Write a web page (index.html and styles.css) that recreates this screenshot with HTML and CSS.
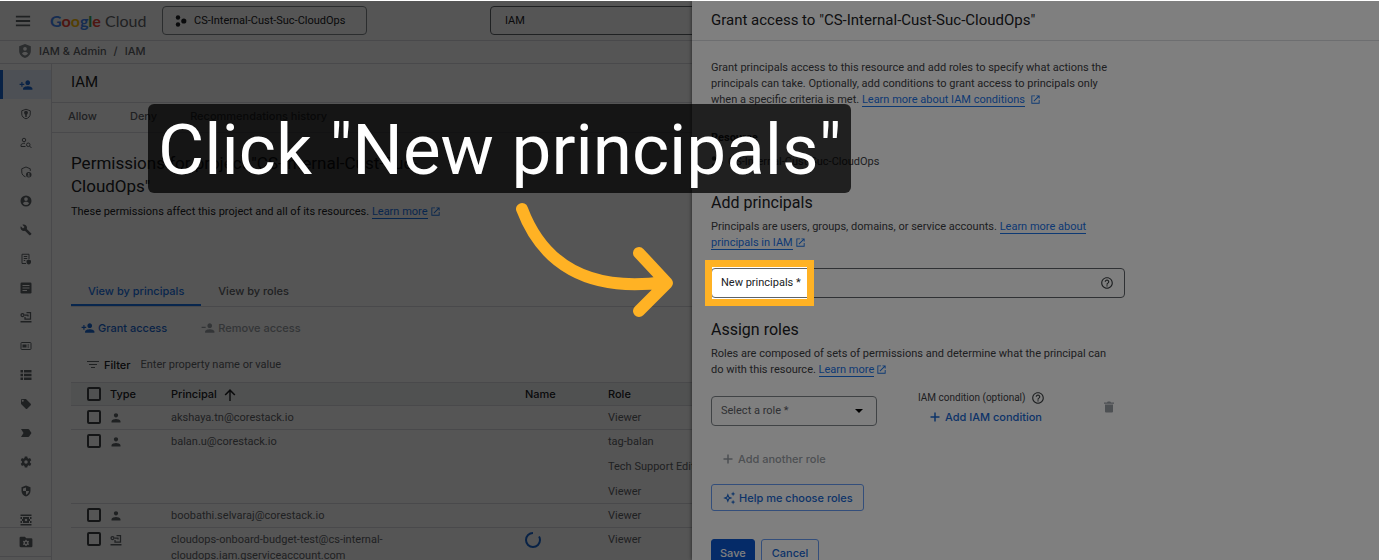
FILE: index.html
```html
<!DOCTYPE html>
<html lang="en">
<head>
    <meta charset="UTF-8">
    <meta name="viewport" content="width=device-width, initial-scale=1.0">
    <title>IAM - Google Cloud</title>
    <link rel="stylesheet" href="styles.css">
</head>
<body>
    <!-- Shared icons -->
    <svg class="sprite" aria-hidden="true">
        <symbol id="person-add" viewBox="0 0 24 24"><path d="M15 12c2.21 0 4-1.79 4-4s-1.79-4-4-4-4 1.79-4 4 1.79 4 4 4zm-9-2V7H4v3H1v2h3v3h2v-3h3v-2H6zm9 4c-2.67 0-8 1.34-8 4v2h16v-2c0-2.66-5.33-4-8-4z"/></symbol>
        <symbol id="person-remove" viewBox="0 0 24 24"><path d="M15 12c2.21 0 4-1.79 4-4s-1.79-4-4-4-4 1.79-4 4 1.79 4 4 4zm-14-2v2h7v-2zm14 4c-2.67 0-8 1.34-8 4v2h16v-2c0-2.66-5.33-4-8-4z"/></symbol>
        <symbol id="person" viewBox="0 0 24 24"><path d="M12 11c2.4 0 4.3-1.9 4.3-4.300S14.400 2.500 12 2.500 7.700 4.300 7.700 6.700 9.600 11 12 11zm0 3c-3.300 0-9 1.500-9 4.500V21h18v-2.500c0-3-5.700-4.500-9-4.500z"/></symbol>
        <symbol id="service" viewBox="0 0 24 24"><path d="M1 20h22v3H1z"/><path fill="none" stroke="currentColor" stroke-width="2.500" d="M9 8h8M13 3h8v13H10v-4M16 8v3"/><circle cx="5" cy="8" r="3" fill="none" stroke="currentColor" stroke-width="2.500"/></symbol>
        <symbol id="open" viewBox="0 0 24 24"><path d="M19 19H5V5h6V3H3v18h18v-8h-2v6zM14 3v2h3.600l-9.800 9.800 1.400 1.400L19 6.400V10h2V3h-7z"/></symbol>
        <symbol id="help" viewBox="0 0 24 24"><path d="M11 18h2v-2h-2v2zm1-16C6.480 2 2 6.480 2 12s4.480 10 10 10 10-4.480 10-10S17.520 2 12 2zm0 18c-4.410 0-8-3.590-8-8s3.590-8 8-8 8 3.590 8 8-3.590 8-8 8zm0-14c-2.210 0-4 1.790-4 4h2c0-1.100.9-2 2-2s2 .9 2 2c0 2-3 1.750-3 5h2c0-2.250 3-2.500 3-5 0-2.210-1.790-4-4-4z"/></symbol>
        <symbol id="plus" viewBox="0 0 24 24"><path d="M21 13.500h-7.500V21h-3v-7.500H3v-3h7.500V3h3v7.500H21z"/></symbol>
    </svg>

    <div class="app">
        <header class="topbar">
            <button class="icon-btn menu" aria-label="Main menu">
                <svg class="icon-lg" viewBox="0 0 18 18"><path d="M1 3h16v2H1zM1 8h16v2H1zM1 13h16v2H1z"/></svg>
            </button>
            <a class="logo" href="#"><b class="g-blue">G</b><b class="g-red">o</b><b class="g-yellow">o</b><b class="g-blue">g</b><b class="g-green">l</b><b class="g-red">e</b> Cloud</a>
            <button class="project">
                <svg class="icon" viewBox="0 0 12 12"><circle cx="3" cy="2.500" r="2.200"/><circle cx="3" cy="9.500" r="2.200"/><circle cx="8.800" cy="6" r="2.600"/></svg>
                CS-Internal-Cust-Suc-CloudOps
            </button>
            <input class="search" type="text" value="IAM" aria-label="Search">
        </header>

        <nav class="breadcrumb" aria-label="Breadcrumb">
            <svg class="icon-lg" viewBox="0 0 24 24"><path fill-rule="evenodd" d="M12 0 2 4v8c0 5.500 4.200 10.400 10 12 5.800-1.600 10-6.500 10-12V4zM12 5a3.200 3.200 0 1 1 0 6.400A3.200 3.200 0 0 1 12 5zm0 8.500c2.500 0 5 1 5 2.600-1 1.700-2.900 3-5 3.400-2.100-.4-4-1.700-5-3.400 0-1.600 2.500-2.600 5-2.600z"/></svg>
            <a href="#">IAM &amp; Admin</a>
            <span>/</span>
            <span>IAM</span>
        </nav>

        <div class="body">
            <aside class="sidebar">
                <ul class="side-list">
                    <li><a class="active" href="#" aria-label="IAM"><svg class="icon-lg"><use href="#person-add"/></svg></a></li>
                    <li><a href="#" aria-label="Privileged access"><svg class="icon" viewBox="0 0 24 24"><path class="line" d="M12 2.500 3.500 5.500V12c0 4.500 3.500 8.300 8.500 9.500 5-1.200 8.500-5 8.500-9.500V5.500z"/><circle cx="12" cy="9.500" r="3.800"/><path d="M10.500 12h3v6h-3z"/></svg></a></li>
                    <li><a href="#" aria-label="Policy troubleshooter"><svg class="icon" viewBox="0 0 24 24"><circle class="line" cx="8" cy="6" r="3.500"/><path class="line" d="M11 19H2v-3c0-2 4-3.500 8-3.500M19 18l4 4"/><circle class="line" cx="16.500" cy="15.500" r="3.500"/></svg></a></li>
                    <li><a href="#" aria-label="Policy analyzer"><svg class="icon" viewBox="0 0 24 24"><path class="line" d="M20.500 10V5.500L12 2 3.500 5.500V12c0 4.500 3 8.300 7.500 9.500"/><circle cx="17.500" cy="17.500" r="5.500"/><circle class="hole" cx="17.500" cy="15.800" r="1.700"/><path class="hole" d="M14.500 20c1-2 5-2 6 0-1.500 1.500-4.500 1.500-6 0z"/></svg></a></li>
                    <li><a href="#" aria-label="Identity"><svg class="icon" viewBox="0 0 24 24"><path fill-rule="evenodd" d="M12 1a11 11 0 1 0 0 22 11 11 0 0 0 0-22zm0 3.500a3.700 3.700 0 1 1 0 7.400 3.700 3.700 0 0 1 0-7.400zm0 9c2.700 0 6 1.300 6 3.300a7.400 7.400 0 0 1-12 0c0-2 3.300-3.300 6-3.300z"/></svg></a></li>
                    <li><a href="#" aria-label="Troubleshoot"><svg class="icon" viewBox="0 0 24 24"><path d="m22.700 19-9.100-9.100c.9-2.300.4-5-1.500-6.900-2-2-5-2.400-7.400-1.300L9 6 6 9 1.600 4.700C.4 7.100.9 10.100 2.900 12.100c1.900 1.900 4.600 2.400 6.900 1.500l9.100 9.100c.4.4 1 .4 1.400 0l2.300-2.300c.5-.4.5-1.100.1-1.400z"/></svg></a></li>
                    <li><a href="#" aria-label="Organization policies"><svg class="icon" viewBox="0 0 24 24"><path class="line" d="M12 21H4V2.500h14V12M7.500 7h7M7.500 11h7M7.500 15h3"/><path d="m17.500 13 4.500 2v3c0 2.500-2 4.500-4.500 5-2.500-.5-4.500-2.500-4.500-5v-3z"/></svg></a></li>
                    <li><a href="#" aria-label="Quotas"><svg class="icon" viewBox="0 0 24 24"><rect x="1" y="1" width="22" height="22" rx="2.500"/><path class="hole" d="M5 6h14v2H5zM5 11h14v2H5zM5 16h9v2H5z"/></svg></a></li>
                    <li><a href="#" aria-label="Service accounts"><svg class="icon"><use href="#service"/></svg></a></li>
                    <li><a href="#" aria-label="Workload identity"><svg class="icon" viewBox="0 0 24 24"><rect class="line" x="2" y="5" width="20" height="14" rx="1.500"/><path d="M5 9h8v6H5zM15 9h3v2h-3zM15 13h3v2h-3z"/></svg></a></li>
                    <li><a href="#" aria-label="Workforce identity"><svg class="icon" viewBox="0 0 24 24"><path d="M1 2h5v5H1zM8 2h15v5H8zM1 9.500h5v5H1zM8 9.500h15v5H8zM1 17h5v5H1zM8 17h15v5H8z"/></svg></a></li>
                    <li><a href="#" aria-label="Labels"><svg class="icon" viewBox="0 0 24 24"><path fill-rule="evenodd" d="m21.400 11.600-9-9C12 2.200 11.500 2 11 2H4a2 2 0 0 0-2 2v7c0 .5.200 1 .6 1.400l9 9c.8.800 2 .8 2.800 0l7-7c.8-.8.800-2 0-2.800zM5.500 7.500a2 2 0 1 1 0-4 2 2 0 0 1 0 4z"/></svg></a></li>
                    <li><a href="#" aria-label="Tags"><svg class="icon" viewBox="0 0 24 24"><path d="M2 4h14.500c.8 0 1.400.4 1.800.9L23 12l-4.700 7.100c-.4.500-1 .9-1.800.9H2l5-8z"/></svg></a></li>
                    <li><a href="#" aria-label="Settings"><svg class="icon" viewBox="0 0 24 24"><path fill-rule="evenodd" d="m9.500 1-.6 3.200-1.900 1.100-3.100-1.100-2.500 4.300L3.900 10.600v2.800l-2.500 2.100 2.500 4.300L7 18.700l1.900 1.100.6 3.200h5l.6-3.200 1.900-1.100 3.100 1.100 2.500-4.300-2.500-2.100v-2.800l2.500-2.100-2.500-4.300L17 5.300l-1.900-1.100-.6-3.200zM12 8.500a3.500 3.500 0 1 1 0 7 3.500 3.500 0 0 1 0-7z"/></svg></a></li>
                    <li><a href="#" aria-label="Privacy and security"><svg class="icon" viewBox="0 0 24 24"><path fill-rule="evenodd" d="M12 1 3 4.500V12c0 5 3.800 9.500 9 11 5.200-1.500 9-6 9-11V4.500zm0 4v7h6c-.4 3.500-2.800 6.500-6 7.600V12H6V7z"/></svg></a></li>
                    <li><a href="#" aria-label="Identity-aware proxy"><svg class="icon" viewBox="0 0 24 24"><path d="M1 1h22v3H1zM1 20h22v3H1zM1 6h3v4H1zM1 14h3v4H1zM20 6h3v4h-3zM20 14h3v4h-3zM6 6h12v4h2v4h-2v4H6v-4H4v-4h2z"/><circle class="hole" cx="12" cy="12" r="2.500"/></svg></a></li>
                </ul>
                <a class="side-footer" href="#" aria-label="Manage resources"><svg class="icon-lg" viewBox="0 0 24 24"><path d="M10 3H3a2 2 0 0 0-2 2v14c0 1.100.9 2 2 2h18a2 2 0 0 0 2-2V7.500a2 2 0 0 0-2-2h-8.500z"/><path class="hole" d="m11 8-.4 1.700-1.200.7-1.700-.6-1 1.900 1.300 1v1.600l-1.300 1 1 1.900 1.700-.6 1.200.7.4 1.700h2l.4-1.700 1.200-.7 1.700.6 1-1.900-1.300-1v-1.600l1.300-1-1-1.900-1.700.6-1.200-.7L13 8z"/><circle cx="12" cy="13.500" r="1.800"/></svg></a>
            </aside>

            <main class="content">
                <h1 class="page-title">IAM</h1>
                <div class="subnav">
                    <a href="#">Allow</a>
                    <a href="#">Deny</a>
                    <a href="#">Recommendations history</a>
                </div>

                <section class="permissions">
                    <h2>Permissions for project "CS-Internal-Cust-Suc-CloudOps"</h2>
                    <p>These permissions affect this project and all of its resources. <a class="link" href="#">Learn more</a><svg class="open"><use href="#open"/></svg></p>

                    <div class="tabs" role="tablist">
                        <button class="tab selected" role="tab">View by principals</button>
                        <button class="tab" role="tab">View by roles</button>
                    </div>

                    <div class="actions">
                        <button class="text-btn"><svg class="icon-lg"><use href="#person-add"/></svg>Grant access</button>
                        <button class="text-btn" disabled><svg class="icon-lg"><use href="#person-remove"/></svg>Remove access</button>
                    </div>

                    <div class="filter">
                        <svg class="icon" viewBox="0 0 12 12"><path d="M0 2h12v1H0zM2 5h8v1H2zM4 8h4v1H4z"/></svg>
                        <label for="filter">Filter</label>
                        <input id="filter" type="text" placeholder="Enter property name or value">
                    </div>

                    <table class="principals">
                        <thead>
                            <tr>
                                <th class="col-check"><input type="checkbox" aria-label="Select all"></th>
                                <th class="col-type">Type</th>
                                <th class="col-principal">Principal <svg class="icon sort" viewBox="0 0 12 12"><path d="M5.300 12V3L1.700 6.500.6 5.400 6 0l5.400 5.400-1.100 1.100L6.700 3v9z"/></svg></th>
                                <th class="col-name">Name</th>
                                <th>Role</th>
                            </tr>
                        </thead>
                        <tbody>
                            <tr>
                                <td class="col-check"><input type="checkbox" aria-label="Select akshaya.tn"></td>
                                <td><svg class="icon"><use href="#person"/></svg></td>
                                <td>akshaya.tn@corestack.io</td>
                                <td></td>
                                <td>Viewer</td>
                            </tr>
                            <tr>
                                <td class="col-check"><input type="checkbox" aria-label="Select balan.u"></td>
                                <td><svg class="icon"><use href="#person"/></svg></td>
                                <td>balan.u@corestack.io</td>
                                <td></td>
                                <td><ul class="roles"><li>tag-balan</li><li>Tech Support Editor</li><li>Viewer</li></ul></td>
                            </tr>
                            <tr>
                                <td class="col-check"><input type="checkbox" aria-label="Select boobathi.selvaraj"></td>
                                <td><svg class="icon"><use href="#person"/></svg></td>
                                <td>boobathi.selvaraj@corestack.io</td>
                                <td></td>
                                <td>Viewer</td>
                            </tr>
                            <tr>
                                <td class="col-check"><input type="checkbox" aria-label="Select cloudops-onboard-budget-test"></td>
                                <td><svg class="icon"><use href="#service"/></svg></td>
                                <td>cloudops-onboard-budget-test@cs-internal-<br>cloudops.iam.gserviceaccount.com</td>
                                <td><svg class="spinner" viewBox="0 0 16 16"><path d="M8 1a7 7 0 1 0 7 7c0-1.300-.3-2.500-1-3.500"/></svg></td>
                                <td>Viewer</td>
                            </tr>
                        </tbody>
                    </table>
                </section>
            </main>
        </div>

        <div class="scrim"></div>

        <section class="drawer" aria-label="Grant access">
            <h2 class="drawer-title">Grant access to "CS-Internal-Cust-Suc-CloudOps"</h2>
            <form class="drawer-body">
                <p>Grant principals access to this resource and add roles to specify what actions the principals can take. Optionally, add conditions to grant access to principals only when a specific criteria is met. <a class="link" href="#">Learn more about IAM conditions</a> <svg class="open"><use href="#open"/></svg></p>

                <h4>Resource</h4>
                <div class="resource">
                    <svg class="icon" viewBox="0 0 12 12"><circle cx="3" cy="2.500" r="2.200"/><circle cx="3" cy="9.500" r="2.200"/><circle cx="8.800" cy="6" r="2.600"/></svg>
                    CS-Internal-Cust-Suc-CloudOps
                </div>

                <h3>Add principals</h3>
                <p>Principals are users, groups, domains, or service accounts. <a class="link" href="#">Learn more about principals in IAM</a><svg class="open"><use href="#open"/></svg></p>
                <div class="field">
                    <label for="new-principals">New principals *</label>
                    <input id="new-principals" type="text">
                    <svg class="icon-lg"><use href="#help"/></svg>
                    <div class="highlight"></div>
                </div>

                <h3>Assign roles</h3>
                <p>Roles are composed of sets of permissions and determine what the principal can do with this resource. <a class="link" href="#">Learn more</a><svg class="open"><use href="#open"/></svg></p>
                <div class="role-row">
                    <div class="select">
                        <select aria-label="Select a role"><option>Select a role *</option></select>
                        <svg viewBox="0 0 8 4"><path d="M0 0h8L4 4z"/></svg>
                    </div>
                    <div class="condition">
                        <span class="condition-label">IAM condition (optional) <svg class="icon-lg"><use href="#help"/></svg></span>
                        <button type="button" class="text-btn"><svg class="icon"><use href="#plus"/></svg>Add IAM condition</button>
                    </div>
                    <button type="button" class="icon-btn delete" aria-label="Delete role" disabled>
                        <svg class="icon" viewBox="0 0 24 24"><path d="M4 7h16v14a2 2 0 0 1-2 2H6a2 2 0 0 1-2-2zM2 3h6l1.500-2h5L16 3h6v2.500H2z"/></svg>
                    </button>
                </div>
                <button type="button" class="text-btn add-role" disabled><svg class="icon"><use href="#plus"/></svg>Add another role</button>
                <button type="button" class="outline-btn choose">
                    <svg class="icon-lg" viewBox="0 0 24 24"><path fill-rule="evenodd" d="m10 4 2.300 5.700L18 12l-5.700 2.300L10 20l-2.300-5.700L2 12l5.700-2.300zm0 5.300L9.200 11.200 7.300 12l1.900.8.8 1.900.8-1.900 1.900-.8-1.900-.8zM19 1l1.100 2.900L23 5l-2.900 1.100L19 9l-1.100-2.900L15 5l2.900-1.100zM19 15l1.100 2.900L23 19l-2.900 1.100L19 23l-1.100-2.900L15 19l2.900-1.100z"/></svg>
                    Help me choose roles
                </button>
                <div class="form-actions">
                    <button type="submit" class="primary-btn">Save</button>
                    <button type="button" class="outline-btn">Cancel</button>
                </div>
            </form>
        </section>

        <!-- Walkthrough step -->
        <div class="callout">Click "New principals"</div>
        <svg class="arrow" viewBox="0 0 170 130"><path d="M12 19C32 72 76 103 155 92M129 63l28 30-28 28"/></svg>
    </div>
</body>
</html>
```
FILE: styles.css
```css
* { box-sizing: border-box; }
body {
    margin: 0;
    padding-top: 1px;
    background: #fff;
    color: #202124;
    font-family: Roboto, Arial, sans-serif;
    font-size: 11px;
    line-height: 16px;
}
h1, h2, h3, h4, p, ul { margin: 0; padding: 0; font-weight: 400; }
ul { list-style: none; }
a { color: inherit; text-decoration: none; }
button, input, select { font: inherit; color: inherit; margin: 0; }
button { display: inline-flex; align-items: center; padding: 0; border: 0; background: none; cursor: pointer; }
svg { fill: currentColor; flex: none; }
.sprite { position: absolute; width: 0; height: 0; }
.icon { width: 12px; height: 12px; }
.icon-lg { width: 14px; height: 14px; }
.line { fill: none; stroke: currentColor; stroke-width: 2px; }
.hole { fill: #fff; }

.app {
    position: relative;
    display: flex;
    flex-direction: column;
    height: calc(100vh - 1px);
    overflow: hidden;
}

/* Top bar */
.topbar {
    display: flex;
    align-items: center;
    height: 40px;
    padding: 0 15px;
    border-bottom: 1px solid #dadce0;
}
.menu { color: #5f6368; margin-right: 19px; }
.menu svg { width: 16px; height: 16px; }
.logo { width: 112px; font-family: Lato, sans-serif; font-size: 16px; color: #5f6368; }
.logo b { font-weight: 700; }
.g-blue { color: #4285f4; }
.g-red { color: #ea4335; }
.g-yellow { color: #fbbc04; }
.g-green { color: #34a853; }
.project {
    gap: 7px;
    width: 205px;
    height: 29px;
    padding: 0 12px;
    border: 1px solid #80868b;
    border-radius: 4px;
    white-space: nowrap;
}
.search {
    flex: 1;
    height: 29px;
    margin-left: 123px;
    padding: 0 14px;
    border: 1px solid #5f6368;
    border-radius: 4px;
    background: none;
}

.breadcrumb {
    display: flex;
    align-items: center;
    gap: 7px;
    height: 23px;
    padding: 0 18px 2px;
    border-bottom: 1px solid #dadce0;
    font-family: Inter, sans-serif;
    font-weight: 500;
    color: #5f6368;
}
.breadcrumb svg { color: #80868b; }

/* Sidebar */
.body { display: flex; flex: 1; min-height: 0; }
.sidebar {
    display: flex;
    flex-direction: column;
    width: 52px;
    border-right: 1px solid #dadce0;
    color: #5f6368;
}
.side-list { flex: 1; min-height: 0; overflow: hidden; padding-top: 6px; }
.side-list a {
    display: flex;
    align-items: center;
    justify-content: center;
    height: 29px;
}
.side-list .active {
    background: #e8f0fe;
    color: #1967d2;
    box-shadow: inset 3px 0 #1967d2;
}
.side-footer {
    display: flex;
    justify-content: center;
    height: 30px;
    margin-bottom: 3px;
    padding-top: 7px;
    border: solid #dadce0;
    border-width: 1px 0;
}

/* Main content */
.content { flex: 1; min-width: 0; }
.page-title {
    height: 39px;
    padding: 0 19px;
    border-bottom: 1px solid #dadce0;
    font-size: 15px;
    line-height: 37px;
}
.subnav {
    display: flex;
    gap: 33px;
    height: 30px;
    padding: 0 16px;
    border-bottom: 1px solid #dadce0;
    font-family: Inter, sans-serif;
    font-weight: 500;
    line-height: 27px;
    color: #5f6368;
}
.permissions { padding: 19px 19px 0; }
.permissions h2 { max-width: 390px; font-size: 17px; line-height: 23px; }
.permissions p { margin-top: 6px; }
.link { color: #1a73e8; border-bottom: 1px solid; }
.open { width: 11px; height: 11px; margin-left: 2px; color: #1a73e8; vertical-align: -2px; }

.tabs { display: flex; margin-top: 57px; border-bottom: 1px solid #dadce0; font-family: Inter, sans-serif; font-weight: 500; }
.tab { height: 29px; padding: 0 17px 2px; color: #5f6368; }
.tab.selected { color: #1a73e8; box-shadow: inset 0 -2px #1a73e8; }
.actions { display: flex; gap: 34px; padding: 13px 10px 0; }
.text-btn {
    gap: 3px;
    height: 16px;
    font-family: Inter, sans-serif;
    font-weight: 500;
    color: #1967d2;
}
button:disabled { color: #9aa0a6; cursor: default; }
.filter { display: flex; align-items: center; height: 46px; padding: 12px 16px 0; color: #5f6368; }
.filter label { margin: 0 10px 0 5px; font-family: Inter, sans-serif; font-weight: 500; color: #202124; }
.filter input { flex: 1; padding: 0; border: 0; background: none; }
.filter input::placeholder { color: #5f6368; opacity: 1; }

.principals { width: 100%; border-collapse: collapse; table-layout: fixed; }
.principals tr { border-bottom: 1px solid #dadce0; }
.principals th, .principals td { padding: 3px 0; text-align: left; vertical-align: top; color: #5f6368; }
.principals td { padding-top: 4px; }
.principals th { background: #f1f3f4; color: #202124; font-family: Inter, sans-serif; font-weight: 500; border-top: 1px solid #dadce0; }
.principals svg { vertical-align: middle; }
.principals .col-check { width: 39px; padding-left: 16px; line-height: 0; padding-top: 4px; }
.col-type { width: 61px; }
.col-principal { width: 354px; }
.col-name { width: 83px; }
.sort { margin-left: 4px; }
.roles li { margin-bottom: 9px; }
.roles li:last-child { margin-bottom: 0; }
input[type="checkbox"] {
    appearance: none;
    width: 14px;
    height: 14px;
    border: 2px solid #3c4043;
    border-radius: 2px;
}
.principals .spinner { width: 16px; height: 16px; fill: none; stroke: #1967d2; stroke-width: 2px; }

/* Drawer */
.scrim { position: absolute; inset: 0; background: rgba(0, 0, 0, 0.33); }
.drawer {
    position: absolute;
    top: 0;
    right: 0;
    bottom: 0;
    width: 687px;
    background: #fff;
    box-shadow: 0 0 4px rgba(0, 0, 0, 0.6);
}
.drawer-title {
    height: 40px;
    padding: 0 19px;
    border-bottom: 1px solid #dadce0;
    font-size: 15px;
    line-height: 38px;
}
.drawer-body { max-width: 452px; padding: 19px; color: #3c4043; }
.drawer-body h3 { font-size: 16px; line-height: 22px; color: #202124; }
.drawer-body h4 { margin-top: 22px; font-weight: 700; color: #202124; }
.resource { display: flex; align-items: center; gap: 5px; margin: 8px 0 22px; }
.drawer-body p { max-width: 408px; margin-top: 5px; }
.drawer-body p:first-child { margin-top: 0; }
.field {
    position: relative;
    display: flex;
    align-items: center;
    height: 30px;
    margin: 17px 0 21px;
    padding: 0 10px 0 9px;
    border: 1px solid #5f6368;
    border-radius: 4px;
}
.field label { color: #202124; }
.field input { flex: 1; min-width: 0; border: 0; background: none; }
/* The huge shadow dims everything except the highlighted control */
.highlight {
    position: absolute;
    z-index: 1;
    top: -9px;
    left: -7px;
    width: 109px;
    height: 46px;
    border: 7px solid #ffb224;
    box-shadow: 0 0 0 2000px rgba(0, 0, 0, 0.5);
    pointer-events: none;
}
.role-row { display: flex; align-items: flex-start; margin-top: 18px; }
.select { position: relative; width: 166px; }
.select select {
    width: 100%;
    height: 30px;
    padding: 0 9px;
    border: 1px solid #80868b;
    border-radius: 4px;
    background: none;
    appearance: none;
    color: #5f6368;
}
.select svg { position: absolute; top: 13px; right: 14px; width: 8px; height: 4px; color: #000; }
.condition { margin-left: 41px; }
.condition-label { display: flex; align-items: center; gap: 5px; height: 16px; margin-top: -6px; font-size: 10px; }
.condition .text-btn { gap: 4px; margin: 3px 0 0 11px; }
.delete { margin: 5px 10px 0 auto; }
.add-role { display: flex; gap: 4px; margin: 23px 0 0 11px; }
.outline-btn, .primary-btn {
    height: 27px;
    padding: 0 10px;
    border: 1px solid #669df6;
    border-radius: 3px;
    font-family: Inter, sans-serif;
    font-weight: 500;
    color: #1967d2;
}
.choose { gap: 3px; margin-top: 17px; }
.form-actions { display: flex; gap: 6px; margin-top: 28px; }
.primary-btn { padding: 0 8px; border-color: #0b57d0; background: #0b57d0; color: #fff; }

/* Walkthrough overlay */
.callout {
    position: absolute;
    z-index: 2;
    top: 103px;
    left: 148px;
    padding: 3px 10px 0;
    border-radius: 6px;
    background: rgba(0, 0, 0, 0.75);
    color: #fff;
    font-size: 71px;
    line-height: 86px;
    white-space: nowrap;
}
.arrow {
    position: absolute;
    z-index: 2;
    top: 189px;
    left: 510px;
    width: 170px;
    height: 130px;
    fill: none;
    stroke: #ffb224;
    stroke-width: 12px;
    stroke-linecap: round;
    stroke-linejoin: round;
}
```
